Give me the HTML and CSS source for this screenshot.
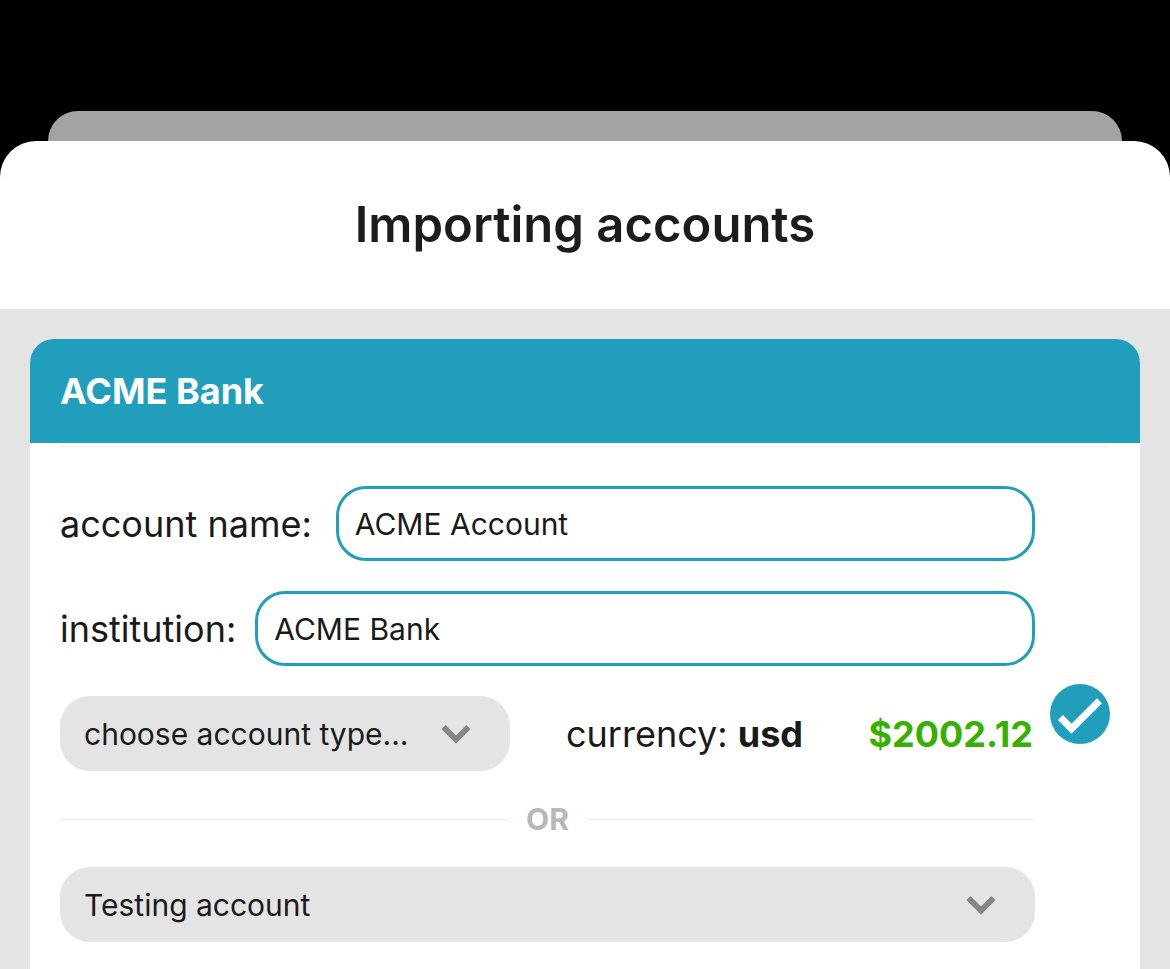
FILE: index.html
```html
<!DOCTYPE html>
<html lang="en">
<head>
<meta charset="utf-8">
<meta name="viewport" content="width=device-width, initial-scale=1">
<title>Importing accounts</title>
<link rel="stylesheet" href="styles.css">
</head>
<body>
<div class="screen">
  <div class="sheet-behind"></div>
  <main class="sheet">
    <header class="sheet-header">
      <h1 class="sheet-title">Importing accounts</h1>
    </header>
    <div class="sheet-body">
      <section class="card">
        <h2 class="card-title">ACME Bank</h2>
        <form class="account">
          <div class="fields">
            <div class="field field-name">
              <label for="account-name">account name:</label>
              <input class="text-input" id="account-name" type="text" value="ACME Account">
            </div>
            <div class="field">
              <label for="institution">institution:</label>
              <input class="text-input" id="institution" type="text" value="ACME Bank">
            </div>
            <div class="summary">
              <div class="picker picker-type">
                <select class="picker-select" aria-label="Account type">
                  <option>choose account type...</option>
                </select>
                <svg class="chevron" viewBox="0 0 30 20" aria-hidden="true"><path d="M2.5 3 15 15.500 27.500 3"/></svg>
              </div>
              <span class="currency">currency: <strong>usd</strong></span>
              <span class="amount">$2002.12</span>
            </div>
            <div class="divider">OR</div>
            <div class="picker">
              <select class="picker-select" aria-label="Existing account">
                <option>Testing account</option>
              </select>
              <svg class="chevron" viewBox="0 0 30 20" aria-hidden="true"><path d="M2.500 3 15 15.500 27.500 3"/></svg>
            </div>
          </div>
          <label class="include">
            <input class="include-box" type="checkbox" aria-label="Import this account" checked>
            <svg class="include-mark" viewBox="0 0 60 60" aria-hidden="true"><path d="M10.500 33.500 21.500 44.800 49.500 16.800"/></svg>
          </label>
        </form>
      </section>
    </div>
  </main>
</div>
</body>
</html>
```
FILE: styles.css
```css
* {
  box-sizing: border-box;
}

body {
  margin: 0;
  background: #000;
  color: #1a1a1a;
  font-family: Inter, "Liberation Sans", sans-serif;
  font-size: 36px;
}

.screen {
  display: flex;
  flex-direction: column;
  min-height: 100vh;
  padding-top: 111px;
}

.sheet-behind {
  height: 30px;
  margin: 0 48px;
  border-radius: 30px 30px 0 0;
  background: #a3a3a5;
}

.sheet {
  display: flex;
  flex: 1;
  flex-direction: column;
  overflow: hidden;
  border-radius: 36px 36px 0 0;
  background: #fff;
}

.sheet-header {
  padding: 54px 30px;
}

.sheet-title {
  margin: 0;
  color: #1c1c1e;
  font-size: 49px;
  font-weight: 600;
  line-height: 60px;
  text-align: center;
}

.sheet-body {
  display: flex;
  flex: 1;
  flex-direction: column;
  padding: 30px 30px 0;
  background: #e4e4e4;
}

.card {
  flex: 1;
  overflow: hidden;
  border-radius: 24px 24px 0 0;
  background: #fff;
}

.card-title {
  margin: 0 0 3px;
  padding: 30px;
  background: #229ebd;
  color: #fff;
  font-size: 36px;
  font-weight: 700;
  line-height: 44px;
}

.account {
  display: flex;
  align-items: center;
  gap: 15px;
  margin: 0 30px;
  padding: 39px 0 27px;
  border-top: 1px solid #ececee;
}

.fields {
  display: flex;
  flex: 1;
  flex-direction: column;
  min-width: 0;
}

.field {
  display: flex;
  align-items: center;
  gap: 19px;
  margin-bottom: 30px;
}

.field-name {
  gap: 24px;
}

.text-input {
  flex: 1;
  min-width: 0;
  height: 75px;
  padding: 0 16px;
  border: 3px solid #229ebd;
  border-radius: 30px;
  background: #fff;
  color: inherit;
  font: inherit;
  font-size: 30px;
}

.summary {
  display: flex;
  align-items: center;
}

.picker {
  display: grid;
  align-items: center;
}

.picker-type {
  flex: 0 0 450px;
}

.picker-select,
.chevron {
  grid-area: 1 / 1;
}

.picker-select {
  width: 100%;
  height: 75px;
  padding: 0 80px 0 24px;
  border: 0;
  border-radius: 30px;
  appearance: none;
  background: #e4e4e4;
  color: inherit;
  font: inherit;
  font-size: 30px;
}

.chevron {
  justify-self: end;
  width: 30px;
  height: 20px;
  margin-right: 39px;
  fill: none;
  stroke: #858585;
  stroke-width: 6;
  pointer-events: none;
}

.currency {
  margin-left: 56px;
}

.amount {
  margin-left: auto;
  padding-right: 2px;
  color: #38b000;
  font-weight: 700;
}

.divider {
  display: flex;
  align-items: center;
  gap: 17px;
  height: 96px;
  color: #b8b8b8;
  font-size: 30px;
  font-weight: 700;
}

.divider::before,
.divider::after {
  flex: 1;
  height: 1px;
  background: #ececee;
  content: "";
}

.include {
  display: grid;
  flex: none;
}

.include-box,
.include-mark {
  grid-area: 1 / 1;
  width: 60px;
  height: 60px;
  margin: 0;
}

.include-box {
  border-radius: 50%;
  appearance: none;
  background: #229ebd;
}

.include-mark {
  fill: none;
  stroke: #fff;
  stroke-width: 7;
  visibility: hidden;
  pointer-events: none;
}

.include-box:checked + .include-mark {
  visibility: visible;
}
```
